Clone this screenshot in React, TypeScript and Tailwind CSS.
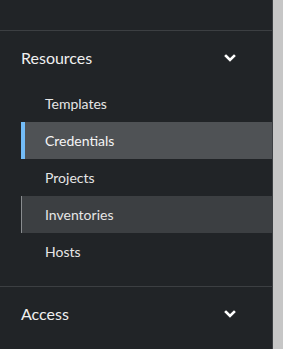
const RESOURCES = [
  { label: "Templates" },
  { label: "Credentials", current: true },
  { label: "Projects" },
  { label: "Inventories", hover: true },
  { label: "Hosts" },
] as const;

function Chevron() {
  return (
    <svg width="12" height="12" viewBox="0 0 12 12" className="text-white">
      <polyline points="2,4 6,8 10,4" fill="none" stroke="currentColor" strokeWidth="2.6" strokeLinecap="square" />
    </svg>
  );
}

function NavItem({ label, current, hover }: { label: string; current?: boolean; hover?: boolean }) {
  return (
    <div
      className={
        "relative ml-[21px] flex h-[37px] items-center pl-[24px] text-[14px] " +
        (current ? "bg-[#4f5255] text-[#f5f5f5]" : hover ? "bg-[#3c3f42] text-[#e6e6e6]" : "text-[#e6e6e6]")
      }
    >
      {current && <span className="absolute inset-y-0 left-0 w-[4px] bg-[#73bcf7]" />}
      {hover && <span className="absolute inset-y-0 left-0 w-px bg-[#8a8d90]" />}
      {label}
    </div>
  );
}

function SectionHeader({ title }: { title: string }) {
  return (
    <div className="flex h-[54px] items-center justify-between pl-[21px] pr-[36px] text-[16px] text-[#f0f0f0]">
      <span>{title}</span>
      <Chevron />
    </div>
  );
}

export default function App() {
  return (
    <div className="flex h-[349px] w-[283px] overflow-hidden bg-[#c6c6c6]" style={{ fontFamily: "Lato, sans-serif" }}>
      <nav className="flex w-[272px] shrink-0 flex-col bg-[#212427]">
        {/* previous group, mostly scrolled away */}
        <div className="-mt-[26px] pb-[19px]">
          <NavItem label="Workflow Approvals" />
        </div>
        <div className="border-t border-[#3c3f42]" />

        {/* Resources */}
        <SectionHeader title="Resources" />
        <div className="pb-[16px]">
          {RESOURCES.map((item) => (
            <NavItem key={item.label} label={item.label} current={"current" in item} hover={"hover" in item} />
          ))}
        </div>
        <div className="border-t border-[#3c3f42]" />

        {/* Access */}
        <SectionHeader title="Access" />
      </nav>
      <div className="w-px bg-[#3c3f42]" />
    </div>
  );
}
